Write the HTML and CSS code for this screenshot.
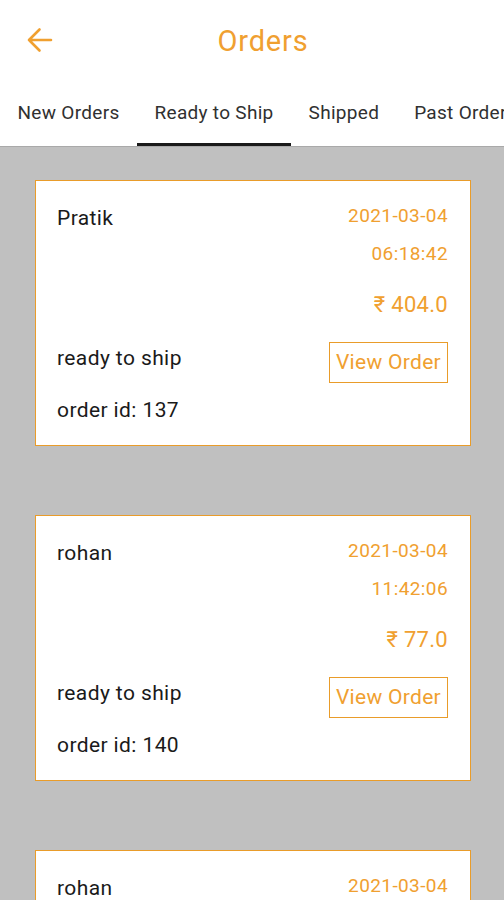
FILE: index.html
```html
<!DOCTYPE html>
<html>

<head>
  <meta charset="UTF-8">
  <title>Orders</title>
  <link rel="stylesheet" href="styles.css">
</head>

<body>
  <header class="top-bar">
    <svg class="back-icon" width="28" height="26" viewBox="0 0 28 26">
      <path d="M25 13 H3 M13.5 2.5 L3 13 L13.5 23.5" fill="none" stroke="#f0a030" stroke-width="2.6" stroke-linecap="round" stroke-linejoin="round" />
    </svg>
    <h1 class="title">Orders</h1>
  </header>

  <nav class="tabs">
    <div class="tab">New Orders</div>
    <div class="tab active">Ready to Ship</div>
    <div class="tab">Shipped</div>
    <div class="tab">Past Orders</div>
  </nav>

  <main class="order-list">
    <div class="order-card">
      <div class="col-left">
        <div class="name">Pratik</div>
        <div class="status">ready to ship</div>
        <div class="order-id">order id: 137</div>
      </div>
      <div class="col-right">
        <div class="date">2021-03-04</div>
        <div class="time">06:18:42</div>
        <div class="price">₹ 404.0</div>
        <div class="view-btn">View Order</div>
      </div>
    </div>

    <div class="order-card">
      <div class="col-left">
        <div class="name">rohan</div>
        <div class="status">ready to ship</div>
        <div class="order-id">order id: 140</div>
      </div>
      <div class="col-right">
        <div class="date">2021-03-04</div>
        <div class="time">11:42:06</div>
        <div class="price">₹ 77.0</div>
        <div class="view-btn">View Order</div>
      </div>
    </div>

    <div class="order-card">
      <div class="col-left">
        <div class="name">rohan</div>
      </div>
      <div class="col-right">
        <div class="date">2021-03-04</div>
      </div>
    </div>
  </main>
</body>

</html>
```

FILE: styles.css
```css
body {
  margin: 0;
  padding: 0;
  width: 504px;
  height: 900px;
  overflow: hidden;
  font-family: Roboto, "Noto Sans", sans-serif;
  background-color: #c0c0c0;
}

.top-bar {
  position: relative;
  height: 82px;
  background-color: white;
  display: flex;
  justify-content: center;
  align-items: center;
}

.back-icon {
  position: absolute;
  left: 26px;
  top: 27px;
}

.title {
  margin: 0 0 0 22px;
  font-size: 29px;
  font-weight: 400;
  letter-spacing: 0.8px;
  color: #f0a030;
}

.tabs {
  display: flex;
  height: 64px;
  background-color: white;
  border-bottom: 1px solid #a9a9a9;
  white-space: nowrap;
  overflow: hidden;
}

.tab {
  box-sizing: border-box;
  height: 64px;
  padding: 0 17.5px;
  line-height: 61px;
  font-size: 19px;
  letter-spacing: 0.3px;
  color: #303030;
  border-bottom: 3px solid transparent;
}

.tab.active {
  border-bottom-color: #1a1a1a;
}

.order-list {
  display: flex;
  flex-direction: column;
  gap: 69px;
  padding: 33px 33px 0 35px;
}

.order-card {
  box-sizing: border-box;
  display: flex;
  justify-content: space-between;
  flex-shrink: 0;
  height: 266px;
  padding: 16px 22px 0 21px;
  background-color: white;
  border: 1px solid #e99c2a;
}

.col-left {
  display: flex;
  flex-direction: column;
  font-size: 21px;
  letter-spacing: 0.4px;
  color: #1a1a1a;
}

.name {
  line-height: 42px;
}

.status {
  margin-top: 104px;
  line-height: 30px;
}

.order-id {
  margin-top: 22px;
  line-height: 30px;
}

.col-right {
  display: flex;
  flex-direction: column;
  align-items: flex-end;
  color: #f0a030;
}

.date,
.time {
  font-size: 19px;
  letter-spacing: 0.4px;
  line-height: 38px;
}

.price {
  margin-top: 17px;
  font-size: 22px;
  letter-spacing: 0.3px;
  line-height: 30px;
}

.view-btn {
  box-sizing: border-box;
  margin-top: 22px;
  height: 41px;
  padding: 0 6px;
  line-height: 39px;
  font-size: 21px;
  letter-spacing: 0.3px;
  border: 1px solid #e99c2a;
}
```
